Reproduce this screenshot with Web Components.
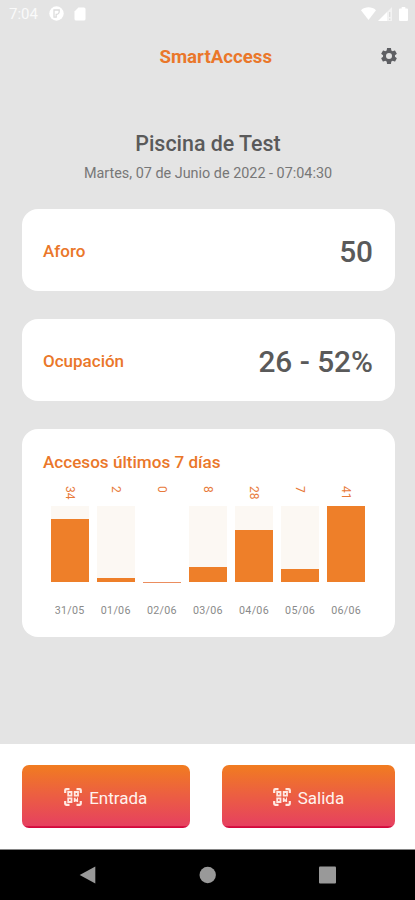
<!DOCTYPE html>
<html lang="es">
<head>
<meta charset="utf-8">
<meta name="viewport" content="width=device-width, initial-scale=1">
<title>SmartAccess</title>
<style>
    body {
        margin: 0;
        background-color: #e4e4e4;
        font-family: Roboto, "Liberation Sans", sans-serif;
        color: #5a5a5a;
        --orange: #ea772a;
    }
</style>
</head>
<body>
<sa-screen>
    <sa-statusbar slot="top" time="7:04"></sa-statusbar>
    <sa-header slot="top">SmartAccess</sa-header>
    <sa-place>
        <span slot="name">Piscina de Test</span>
        <span slot="date">Martes, 07 de Junio de 2022 - 07:04:30</span>
    </sa-place>
    <sa-card><span slot="label">Aforo</span><span slot="value">50</span></sa-card>
    <sa-card><span slot="label">Ocupación</span><span slot="value">26 - 52%</span></sa-card>
    <sa-chart>
        <span slot="title">Accesos últimos 7 días</span>
        <sa-bar value="34" height="62.5">31/05</sa-bar>
        <sa-bar value="2" height="3.7">01/06</sa-bar>
        <sa-bar value="0" height="0">02/06</sa-bar>
        <sa-bar value="8" height="14.5">03/06</sa-bar>
        <sa-bar value="28" height="51.5">04/06</sa-bar>
        <sa-bar value="7" height="12.5">05/06</sa-bar>
        <sa-bar value="41" height="75.5">06/06</sa-bar>
    </sa-chart>
    <sa-button slot="actions">Entrada</sa-button>
    <sa-button slot="actions">Salida</sa-button>
    <sa-navbar slot="bottom"></sa-navbar>
</sa-screen>

<script>
function define(name, html, setup) {
    const tpl = document.createElement('template');
    tpl.innerHTML = html;
    customElements.define(name, class extends HTMLElement {
        constructor() {
            super();
            this.attachShadow({mode: 'open'});
            this.shadowRoot.appendChild(tpl.content.cloneNode(true));
        }

        connectedCallback() {
            if (setup) setup(this, this.shadowRoot);
        }
    });
}

define('sa-screen', `
    <style>
        :host {
            display: flex;
            flex-direction: column;
            width: 415px;
            height: 900px;
            overflow: hidden;
        }
        main {
            flex: 1;
            display: flex;
            flex-direction: column;
            gap: 27.7px;
            padding: 0 20.5px 0 21.5px;
        }
        footer {
            display: grid;
            grid-template-columns: 168.5px 173px;
            gap: 32px;
            box-sizing: border-box;
            height: 105.5px;
            padding: 21.5px 20.5px 0 21.5px;
            background-color: #fff;
        }
    </style>
    <slot name="top"></slot>
    <main><slot></slot></main>
    <footer><slot name="actions"></slot></footer>
    <slot name="bottom"></slot>`);

define('sa-statusbar', `
    <style>
        :host {
            display: flex;
            align-items: center;
            height: 27px;
            padding: 0 7.5px 0 9px;
            color: #fafafa;
            font-size: 15px;
        }
        svg { display: block; fill: #fff; }
        .round { margin-left: 11.5px; }
        .sd { margin-left: 10px; }
        .right { display: flex; gap: 2px; margin-left: auto; }
        .battery { margin-left: 5px; }
    </style>
    <span id="time"></span>
    <svg class="round" width="15" height="15" viewBox="0 0 15 15">
        <circle cx="7.5" cy="7.5" r="7.2"/>
        <path d="M5 4h5.2v1.5a3 3 0 0 1-3 3v2.7H5z" fill="none" stroke="#dcdcdc" stroke-width="1.3"/>
    </svg>
    <svg class="sd" width="12" height="14" viewBox="0 0 12 14">
        <path d="M4.4.5H10A1.5 1.5 0 0 1 11.5 2v10a1.5 1.5 0 0 1-1.5 1.5H2A1.5 1.5 0 0 1 .5 12V4.5z"/>
    </svg>
    <div class="right">
        <svg width="15" height="14" viewBox="0 0 15 14"><path d="M0 3.2C4.2-.6 10.8-.6 15 3.2L7.5 13z"/></svg>
        <svg width="14" height="14" viewBox="0 0 14 14">
            <path d="M0 14L9 5v9z"/>
            <path d="M9 5l5-5v14H9z" opacity=".55"/>
            <path d="M11 5h1.4v5H11zM11 11.5h1.4V13H11z" fill="#dedede"/>
        </svg>
        <svg class="battery" width="9" height="14" viewBox="0 0 9 14"><path d="M2.7 0h3.6v1.4H8q1 0 1 1V13q0 1-1 1H1q-1 0-1-1V2.4q0-1 1-1h1.7z"/></svg>
    </div>`, (el, root) => {
    root.querySelector('#time').textContent = el.getAttribute('time');
});

define('sa-header', `
    <style>
        :host {
            display: grid;
            grid-template-columns: 1fr auto 1fr;
            align-items: center;
            height: 57px;
            padding: 0 16.5px 0 33px;
            color: var(--orange);
            font-size: 18.7px;
            font-weight: 700;
        }
        span { padding-top: 2px; }
        svg { justify-self: end; fill: #5e5f63; }
    </style>
    <i></i>
    <span><slot></slot></span>
    <svg width="20" height="20" viewBox="0 0 24 24">
        <path d="M19.14 12.94c.04-.3.06-.61.06-.94 0-.32-.02-.64-.07-.94l2.03-1.58c.18-.14.23-.41.12-.61l-1.92-3.32c-.12-.22-.37-.29-.59-.22l-2.39.96c-.5-.38-1.03-.7-1.62-.94l-.36-2.54c-.04-.24-.24-.41-.48-.41h-3.84c-.24 0-.43.17-.47.41l-.36 2.54c-.59.24-1.13.57-1.62.94l-2.39-.96c-.22-.08-.47 0-.59.22L2.74 8.87c-.12.21-.08.47.12.61l2.03 1.58c-.05.3-.09.63-.09.94s.02.64.07.94l-2.03 1.58c-.18.14-.23.41-.12.61l1.92 3.32c.12.22.37.29.59.22l2.39-.96c.5.38 1.03.7 1.62.94l.36 2.54c.05.24.24.41.48.41h3.84c.24 0 .44-.17.47-.41l.36-2.54c.59-.24 1.13-.56 1.62-.94l2.39.96c.22.08.47 0 .59-.22l1.92-3.32c.12-.22.07-.47-.12-.61l-2.01-1.58zM12 15.6a3.6 3.6 0 1 1 0-7.2 3.6 3.6 0 0 1 0 7.2z"/>
    </svg>`);

define('sa-place', `
    <style>
        :host {
            display: flex;
            flex-direction: column;
            align-items: center;
            gap: 7px;
            box-sizing: border-box;
            height: 97.8px;
            padding-top: 48px;
        }
        .name { font-size: 21.4px; line-height: 24px; font-weight: 500; }
        .date { font-size: 14.4px; line-height: 22px; color: #777; }
    </style>
    <div class="name"><slot name="name"></slot></div>
    <div class="date"><slot name="date"></slot></div>`);

define('sa-card', `
    <style>
        :host {
            display: flex;
            align-items: center;
            justify-content: space-between;
            box-sizing: border-box;
            height: 82px;
            padding: 2px 21.5px 0;
            border-radius: 16px;
            background-color: #fff;
        }
        .label { font-size: 17px; font-weight: 500; color: var(--orange); }
        .value { font-size: 29.8px; font-weight: 500; }
    </style>
    <span class="label"><slot name="label"></slot></span>
    <span class="value"><slot name="value"></slot></span>`);

define('sa-chart', `
    <style>
        :host {
            display: block;
            box-sizing: border-box;
            height: 208px;
            padding: 22px 21.5px 0;
            border-radius: 16px;
            background-color: #fff;
        }
        .title { font-size: 17.1px; line-height: 22px; font-weight: 500; color: var(--orange); }
        .bars {
            display: grid;
            grid-template-columns: repeat(7, 38.4px);
            gap: 7.7px;
            padding: 13.5px 0 0 7.5px;
        }
    </style>
    <div class="title"><slot name="title"></slot></div>
    <div class="bars"><slot></slot></div>`);

define('sa-bar', `
    <style>
        :host {
            display: flex;
            flex-direction: column;
            align-items: center;
            font-size: 10.7px;
            color: #8a8a8a;
        }
        #value {
            writing-mode: vertical-rl;
            height: 20px;
            line-height: 12px;
            color: #e87a3a;
            font-size: 12px;
        }
        .track {
            display: flex;
            align-items: flex-end;
            width: 100%;
            height: 75.5px;
            background-color: #fcf8f3;
        }
        #fill { width: 100%; background-color: #ee7f29; }
        :host([value="0"]) .track { background: none; }
        :host([value="0"]) #fill { height: 1px; margin-bottom: -1px; background-color: #eb8d5e; }
        .label { margin-top: 22px; line-height: 14px; letter-spacing: .3px; }
    </style>
    <span id="value"></span>
    <div class="track"><div id="fill"></div></div>
    <span class="label"><slot></slot></span>`, (el, root) => {
    root.querySelector('#value').textContent = el.getAttribute('value');
    if (Number(el.getAttribute('height'))) {
        root.querySelector('#fill').style.height = el.getAttribute('height') + 'px';
    }
});

define('sa-button', `
    <style>
        :host {
            display: flex;
            align-items: center;
            justify-content: center;
            gap: 7px;
            box-sizing: border-box;
            height: 63px;
            padding: 3px 0 0;
            border-radius: 7px;
            background: linear-gradient(#f17c20, #ec6040 45%, #e6415f 96%, #d3083c 98%);
            color: #fff3ee;
            font-size: 17px;
        }
        svg { margin-top: -3px; fill: none; stroke: #ffe9e2; }
    </style>
    <svg width="18" height="18" viewBox="0 0 18 18">
        <path d="M1.2 5V2.2q0-1 1-1H5.5M12.5 1.2h3.3q1 0 1 1V5M1.2 13v2.8q0 1 1 1H5.5M12.5 16.8h3.3q1 0 1-1V13" stroke-width="2.2"/>
        <path d="M4.2 4h3.3v3.6H4.2zM10.7 4H14v3.6h-3.3zM4.2 10.4h3.3V14H4.2zM10.7 9.8v2.4h2.5V14M14 10.5h-1M10.7 14v-1" stroke-width="1.8"/>
    </svg>
    <span><slot></slot></span>`);

define('sa-navbar', `
    <style>
        :host {
            display: flex;
            justify-content: space-between;
            align-items: center;
            box-sizing: border-box;
            height: 51px;
            padding: 0 79px;
            border-top: 1px solid #858585;
            background-color: #000;
        }
        svg { fill: #999; }
    </style>
    <svg width="17" height="18" viewBox="0 0 17 18"><path d="M16.3.5v17L.7 9z"/></svg>
    <svg width="17" height="18" viewBox="0 0 17 18"><circle cx="8.7" cy="9" r="8.2"/></svg>
    <svg width="17" height="18" viewBox="0 0 17 18"><rect y=".5" width="17" height="17" rx="1"/></svg>`);
</script>
</body>
</html>
